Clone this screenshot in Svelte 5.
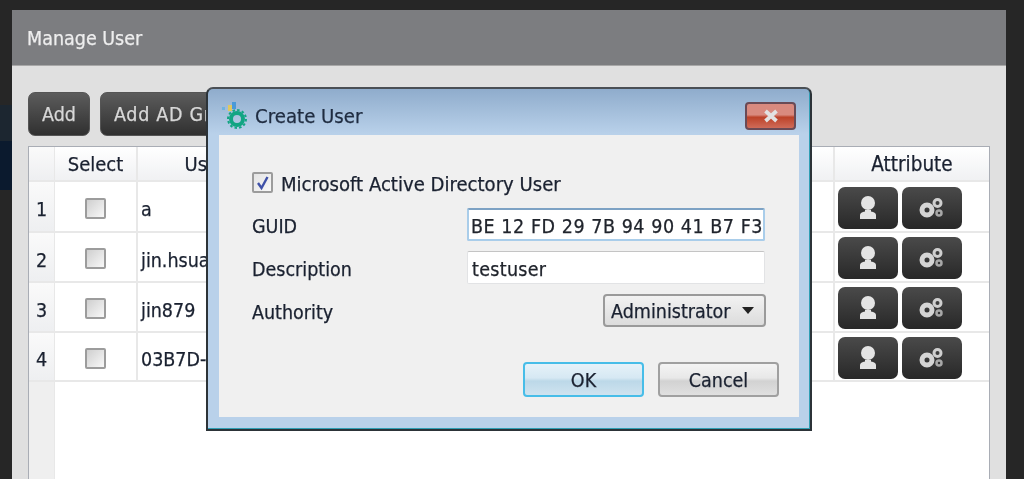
<script>
	const users = ['a', 'jin.hsua', 'jin879', '03B7D-4'];
</script>

<div class="page">
	<div class="side">
		<div class="strip"></div>
	</div>
	<div class="panel">
		<div class="panel-title">Manage User</div>
		<div class="panel-body">
			<div class="toolbar">
				<button class="dark">Add</button>
				<button class="dark wide">Add AD Group</button>
			</div>
			<div class="table">
				<div class="row head">
					<div class="num"></div>
					<div class="cell center">Select</div>
					<div class="cell center">User</div>
					<div class="cell"></div>
					<div class="cell attr-head">Attribute</div>
				</div>
				{#each users as user, i}
					<div class="row">
						<div class="num">{i + 1}</div>
						<div class="cell center"><span class="check"></span></div>
						<div class="cell">{user}</div>
						<div class="cell"></div>
						<div class="cell attrs">
							<button class="icon-btn" aria-label="User">
								<svg width="24" height="26" viewBox="0 0 24 26">
									<circle cx="12" cy="8" r="7" fill="#e4e4e4" />
									<path d="M9 15h6v1.500c3 .5 5 1.500 5 3.500v4H4v-4c0-2 2-3 5-3.500z" fill="#e4e4e4" />
								</svg>
							</button>
							<button class="icon-btn" aria-label="Settings">
								<svg width="26" height="24" viewBox="0 0 26 24">
									<circle cx="8" cy="14" r="5" fill="none" stroke="#d4d4d4" stroke-width="5" />
									<circle cx="18.500" cy="7" r="3.500" fill="none" stroke="#cfcfcf" stroke-width="3" />
									<circle cx="20" cy="17" r="2.500" fill="none" stroke="#a8a8a8" stroke-width="2.500" />
								</svg>
							</button>
						</div>
					</div>
				{/each}
				<div class="filler"><div class="num"></div></div>
			</div>
		</div>
	</div>

	<div class="dialog">
		<div class="dialog-title">
			<svg width="30" height="34" viewBox="0 0 30 34">
				<rect x="3" y="12" width="3" height="3" fill="#6fb3e0" />
				<rect x="9" y="10" width="4" height="6" fill="#e0c860" />
				<rect x="13" y="7" width="4" height="7" fill="#4a9ad8" />
				<circle cx="18" cy="24" r="6" fill="none" stroke="#12a583" stroke-width="4" />
				<circle cx="18" cy="24" r="9" fill="none" stroke="#12a583" stroke-width="2" stroke-dasharray="2.500 2.200" />
			</svg>
			<span>Create User</span>
			<button class="close" aria-label="Close">
				<svg width="20" height="14" viewBox="0 0 20 14">
					<path d="M4.500 2l11 10M15.500 2l-11 10" stroke="#e2e2e2" stroke-width="3.800" fill="none" />
				</svg>
			</button>
		</div>
		<div class="dialog-body">
			<div class="ad-line">
				<span class="check checked">
					<svg width="16" height="16" viewBox="0 0 16 16">
						<path d="M3 8l3.500 5L12.500 2" stroke="#3f51a8" stroke-width="2.400" fill="none" />
					</svg>
				</span>
				<span>Microsoft Active Directory User</span>
			</div>
			<div class="form">
				<span>GUID</span>
				<div class="input focus">BE 12 FD 29 7B 94 90 41 B7 F3</div>
				<span>Description</span>
				<div class="input">testuser</div>
				<span>Authority</span>
				<div class="select">Administrator <i class="caret"></i></div>
			</div>
			<div class="actions">
				<button class="sys ok">OK</button>
				<button class="sys">Cancel</button>
			</div>
		</div>
	</div>
</div>

<style>
	:global(body) {
		margin: 0;
		background: #232323;
	}

	.page {
		position: relative;
		display: flex;
		width: 1024px;
		height: 479px;
		overflow: hidden;
		padding-top: 10px;
		padding-right: 18px;
		box-sizing: border-box;
		background: #262626;
		font-family: "DejaVu Sans Condensed", "DejaVu Sans", sans-serif;
		font-size: 19.5px;
		color: #1a2130;
		-webkit-text-stroke: 0.25px currentColor;
		filter: blur(0.6px);
	}

	.side {
		width: 12px;
		flex: none;
		padding-top: 95px;
	}

	.strip {
		height: 85px;
		background: linear-gradient(#1c2630 0 36px, #0b1a2e 36px);
	}

	.panel {
		flex: 1;
		display: flex;
		flex-direction: column;
		background: #e0e0e0;
	}

	.panel-title {
		height: 56px;
		line-height: 57px;
		padding-left: 15px;
		box-sizing: border-box;
		background: #7c7d80;
		border-bottom: 1px solid #a8a8a8;
		color: #eeeeee;
	}

	.panel-body {
		flex: 1;
		padding: 26px 16px 0;
		display: flex;
		flex-direction: column;
		gap: 10px;
	}

	.toolbar {
		display: flex;
		gap: 10px;
	}

	button {
		font: inherit;
		padding: 0;
		cursor: pointer;
	}

	.dark {
		height: 44px;
		padding: 0 13px;
		border: 1px solid #555;
		border-radius: 7px;
		background: linear-gradient(#5c5c5c, #303030);
		color: #d8d8d8;
	}

	.wide {
		letter-spacing: 0.7px;
	}

	.table {
		flex: 1;
		display: flex;
		flex-direction: column;
		background: #fff;
		border: 1px solid #a9adb5;
		border-bottom: 0;
	}

	.row {
		display: grid;
		grid-template-columns: 26px 83px 136px 1fr 154px;
		height: 50px;
		box-sizing: border-box;
		border-bottom: 2px solid #e8e8e8;
	}

	.row.head {
		height: 35px;
		font-size: 20px;
		background: linear-gradient(#fff, #f0f1f3);
	}

	.head + .row {
		height: 51px;
	}

	.row:nth-child(5) {
		height: 49px;
	}

	.num {
		display: flex;
		align-items: center;
		padding-left: 7px;
		background: linear-gradient(#fafafa, #eeeff1);
		border-right: 1px solid #e8e8e8;
	}

	.row:not(.head) .num,
	.row:not(.head) .cell {
		padding-top: 6px;
		box-sizing: border-box;
	}

	.cell {
		display: flex;
		align-items: center;
		padding-left: 3px;
		border-right: 2px solid #e8e8e8;
	}

	.cell:last-child {
		border-right: 0;
	}

	.center {
		justify-content: center;
		padding-left: 0;
	}

	.attr-head {
		justify-content: center;
		padding-left: 0;
		font-size: 20.5px;
	}

	.row:not(.head) .attrs {
		gap: 4px;
		padding: 2px 0 0 3px;
	}

	.icon-btn {
		display: flex;
		align-items: center;
		justify-content: center;
		width: 60px;
		height: 42px;
		border: 0;
		border-radius: 7px;
		background: linear-gradient(#4a4a4a, #282828);
	}

	.check {
		display: inline-flex;
		align-items: center;
		justify-content: center;
		width: 21px;
		height: 21px;
		box-sizing: border-box;
		border: 2px solid #9c9c9c;
		border-radius: 2px;
		background: linear-gradient(135deg, #cfcfcf, #f8f8f8);
		margin-bottom: 3px;
	}

	.check.checked {
		background: linear-gradient(135deg, #e4e4e4, #f8f8f8);
	}

	.filler {
		flex: 1;
		display: flex;
	}

	.filler .num {
		width: 26px;
		box-sizing: border-box;
		background: #efefef;
	}

	.dialog {
		position: absolute;
		left: 206px;
		top: 87px;
		width: 606px;
		height: 344px;
		box-sizing: border-box;
		display: flex;
		flex-direction: column;
		padding: 0 11px 12px;
		border: 2px solid #2c3338;
		border-top-color: #4a4f55;
		border-radius: 7px 7px 0 0;
		background: linear-gradient(#8faccc, #b9d1ea 45px);
		box-shadow: inset -1px -1px 0 #2f9fb5;
	}

	.dialog-title {
		display: flex;
		align-items: center;
		height: 46px;
		flex: none;
		gap: 6px;
		font-size: 20.2px;
		color: #1f2c40;
	}

	.dialog-title span {
		flex: 1;
		padding-top: 7px;
	}

	.close {
		display: flex;
		align-items: center;
		justify-content: center;
		width: 51px;
		height: 28px;
		margin-top: 8px;
		margin-right: 3px;
		border: 2px solid #6a4a55;
		border-radius: 4px;
		background: linear-gradient(#d98a7f 0 45%, #bc4229 55%, #cf6b58);
	}

	.dialog-body {
		flex: 1;
		background: #f0f0f0;
		padding: 36px 33px 20px;
		display: flex;
		flex-direction: column;
	}

	.ad-line {
		display: flex;
		align-items: center;
		gap: 8px;
		height: 26px;
		font-size: 20.1px;
	}

	.form {
		display: grid;
		grid-template-columns: 215px 298px;
		grid-auto-rows: 33px;
		row-gap: 10px;
		align-items: center;
		margin-top: 11px;
	}

	.form > span {
		padding-top: 4px;
	}

	.input {
		height: 33px;
		line-height: 36px;
		padding-left: 4px;
		box-sizing: border-box;
		background: #fff;
		border: 1px solid #e2e3e5;
		border-top-color: #c4c4c4;
		border-radius: 2px;
		overflow: hidden;
		white-space: nowrap;
		letter-spacing: 0.3px;
		color: #20242c;
	}

	.input.focus {
		border: 2px solid #a9cdea;
		border-top-color: #7da2c4;
		padding-left: 2px;
		line-height: 34px;
		letter-spacing: 0.55px;
	}

	.select {
		justify-self: end;
		width: 163px;
		height: 33px;
		line-height: 32px;
		padding-left: 6px;
		box-sizing: border-box;
		border: 2px solid #9a9a9a;
		border-radius: 4px;
		background: linear-gradient(#f2f2f2, #dcdcdc);
		white-space: nowrap;
		position: relative;
		transform: translateX(1px);
	}

	.caret {
		position: absolute;
		right: 10px;
		top: 11px;
		border: 6px solid transparent;
		border-top: 7px solid #222;
		border-bottom: 0;
	}

	.actions {
		margin-top: auto;
		display: flex;
		justify-content: flex-end;
		gap: 14px;
		margin-right: -13px;
	}

	.sys {
		width: 121px;
		height: 35px;
		padding-top: 2px;
		border: 2px solid #a0a0a0;
		border-radius: 4px;
		background: linear-gradient(#f4f4f4, #e8e8e8 45%, #d2d2d2 55%, #e0e0e0);
		color: #1a2130;
	}

	.sys.ok {
		border-color: #47bde8;
		background: linear-gradient(#e6f2f9, #d6e8f3 45%, #bcd8e8 55%, #cfe3ef);
	}
</style>
